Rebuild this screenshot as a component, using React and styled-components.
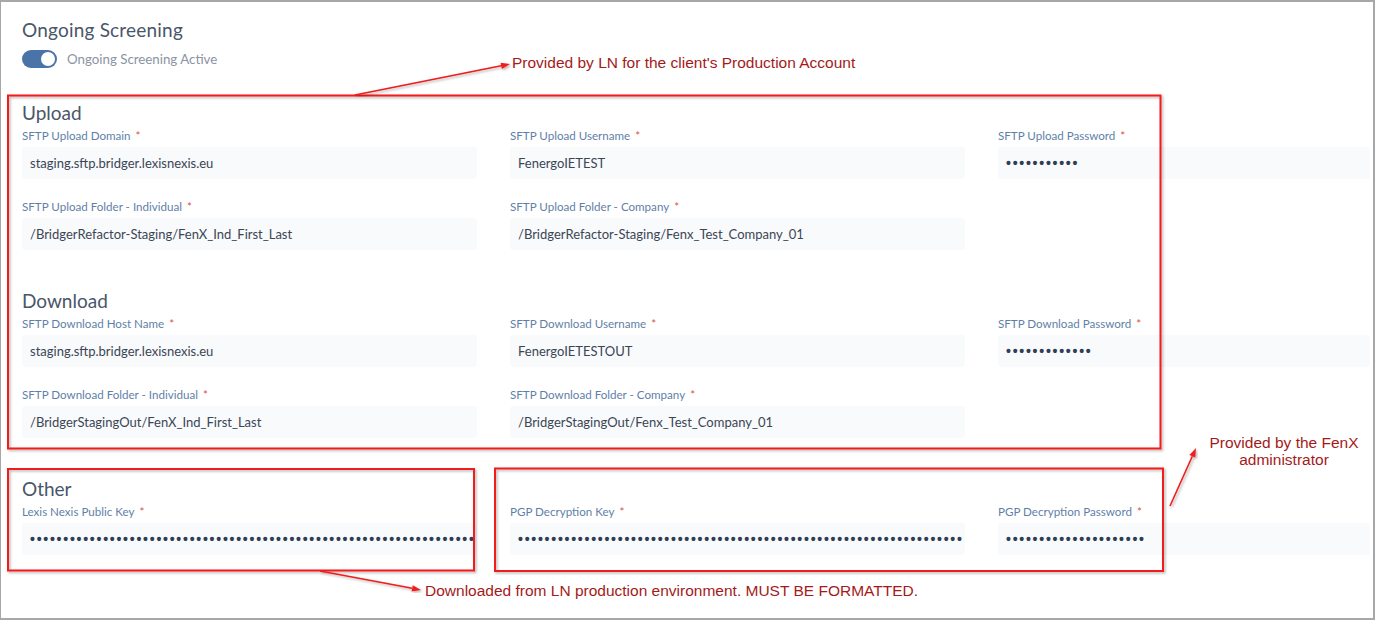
import React from "react";
import styled, { createGlobalStyle } from "styled-components";

const GlobalStyle = createGlobalStyle`
  html, body {
    margin: 0;
    padding: 0;
    background: #ffffff;
  }
  body {
    font-family: Lato, "Open Sans", "Liberation Sans", sans-serif;
  }
  * { box-sizing: border-box; }
`;

const Frame = styled.div`
  position: relative;
  width: 1375px;
  height: 620px;
  border: 2px solid #a7a7a7;
  border-left-width: 1px;
  background: #ffffff;
  overflow: hidden;
`;

const Content = styled.div`
  padding: 16px 3px 0 21px;
`;

const Title = styled.h2`
  margin: 0;
  font-size: 19px;
  line-height: 24px;
  font-weight: 400;
  color: #4a5669;
  letter-spacing: 0.2px;
`;

const ToggleRow = styled.div`
  display: flex;
  align-items: center;
  gap: 10px;
  margin-top: 8px;
  height: 18px;
`;

const Track = styled.span`
  position: relative;
  display: inline-block;
  width: 35px;
  height: 18px;
  border-radius: 9px;
  background: ${({ on }) => (on ? "#4a73a8" : "#c3cad4")};
`;

const Knob = styled.span`
  position: absolute;
  top: 2px;
  left: ${({ on }) => (on ? "19px" : "2px")};
  width: 14px;
  height: 14px;
  border-radius: 50%;
  background: #ffffff;
`;

const ToggleLabel = styled.span`
  font-size: 13.3px;
  color: #8a94a3;
`;

const Section = styled.section`
  margin-top: ${({ first }) => (first ? "33px" : "39px")};
`;

const SectionTitle = styled.h3`
  margin: 0 0 4px 0;
  font-size: 19px;
  line-height: 24px;
  font-weight: 400;
  color: #4a5669;
`;

const Grid = styled.div`
  display: grid;
  grid-template-columns: 455px 455px 1fr;
  column-gap: 33px;
  row-gap: 21px;
`;

const Field = styled.div`
  display: flex;
  flex-direction: column;
  min-width: 0;
`;

const Label = styled.label`
  font-size: 11.6px;
  line-height: 14px;
  margin-bottom: 4px;
  color: #5f7fa8;
  white-space: nowrap;
`;

const Star = styled.span`
  color: #e0504f;
  margin-left: 5px;
`;

const Input = styled.div`
  height: 32px;
  display: flex;
  align-items: center;
  padding: 0 8px;
  border-radius: 3px;
  background: #f8fafc;
  color: #3b4654;
  font-size: 13px;
  white-space: nowrap;
  overflow: hidden;
`;

const Dots = styled.span`
  font-family: "Liberation Sans", Arial, sans-serif;
  font-size: 14px;
  font-weight: 700;
  letter-spacing: 1.75px;
  color: #2f3d55;
`;

const Overlay = styled.svg`
  position: absolute;
  top: -2px;
  left: -1px;
  pointer-events: none;
`;

const Note = styled.div`
  position: absolute;
  top: ${({ top }) => top}px;
  left: ${({ left }) => left}px;
  width: ${({ w }) => (w ? `${w}px` : "auto")};
  font-family: "Liberation Sans", Arial, sans-serif;
  font-size: 15.5px;
  line-height: 17px;
  color: #a41a1a;
  text-align: ${({ center }) => (center ? "center" : "left")};
  white-space: nowrap;
`;

const dots = (n) => "•".repeat(n);

const sections = [
  {
    title: "Upload",
    fields: [
      { label: "SFTP Upload Domain", value: "staging.sftp.bridger.lexisnexis.eu" },
      { label: "SFTP Upload Username", value: "FenergoIETEST" },
      { label: "SFTP Upload Password", secret: 11 },
      { label: "SFTP Upload Folder - Individual", value: "/BridgerRefactor-Staging/FenX_Ind_First_Last" },
      { label: "SFTP Upload Folder - Company", value: "/BridgerRefactor-Staging/Fenx_Test_Company_01" },
    ],
  },
  {
    title: "Download",
    fields: [
      { label: "SFTP Download Host Name", value: "staging.sftp.bridger.lexisnexis.eu" },
      { label: "SFTP Download Username", value: "FenergoIETESTOUT" },
      { label: "SFTP Download Password", secret: 13 },
      { label: "SFTP Download Folder - Individual", value: "/BridgerStagingOut/FenX_Ind_First_Last" },
      { label: "SFTP Download Folder - Company", value: "/BridgerStagingOut/Fenx_Test_Company_01" },
    ],
  },
  {
    title: "Other",
    fields: [
      { label: "Lexis Nexis Public Key", secret: 67 },
      { label: "PGP Decryption Key", secret: 67 },
      { label: "PGP Decryption Password", secret: 21 },
    ],
  },
];

const Arrow = ({ x1, y1, x2, y2 }) => {
  const a = Math.atan2(y2 - y1, x2 - x1);
  const len = 9;
  const w = 3.2;
  const bx = x2 - len * Math.cos(a);
  const by = y2 - len * Math.sin(a);
  const px = -Math.sin(a) * w;
  const py = Math.cos(a) * w;
  return (
    <g filter="url(#shadow)">
      <line x1={x1} y1={y1} x2={bx} y2={by} stroke="#f21b1b" strokeWidth="1.6" />
      <polygon
        points={`${x2},${y2} ${bx + px},${by + py} ${bx - px},${by - py}`}
        fill="#f21b1b"
      />
    </g>
  );
};

const Annotations = () => (
  <Overlay width="1375" height="620" viewBox="0 0 1375 620">
    <defs>
      <filter id="shadow" x="-5%" y="-5%" width="110%" height="110%">
        <feDropShadow dx="1.5" dy="1.5" stdDeviation="0.8" floodColor="#000" floodOpacity="0.3" />
      </filter>
    </defs>
    <g fill="none" stroke="#f31c1c" strokeWidth="2" filter="url(#shadow)">
      <rect x="8" y="95.5" width="1152.5" height="353" />
      <rect x="8" y="469" width="466" height="101.5" />
      <rect x="495" y="468.5" width="668" height="102.5" />
    </g>
    <Arrow x1={355} y1={95} x2={510} y2={64} />
    <Arrow x1={320} y1={571} x2={421} y2={590} />
    <Arrow x1={1170} y1={506} x2={1196} y2={448} />
  </Overlay>
);

export default function App() {
  return (
    <>
      <GlobalStyle />
      <Frame>
        <Content>
          <Title>Ongoing Screening</Title>
          <ToggleRow>
            <Track on={1}>
              <Knob on={1} />
            </Track>
            <ToggleLabel>Ongoing Screening Active</ToggleLabel>
          </ToggleRow>
          {sections.map((s, i) => (
            <Section key={s.title} first={i === 0 ? 1 : 0}>
              <SectionTitle>{s.title}</SectionTitle>
              <Grid>
                {s.fields.map((f) => (
                  <Field key={f.label}>
                    <Label>
                      {f.label}
                      <Star>*</Star>
                    </Label>
                    <Input>{f.secret ? <Dots>{dots(f.secret)}</Dots> : f.value}</Input>
                  </Field>
                ))}
              </Grid>
            </Section>
          ))}
        </Content>
        <Annotations />
        <Note top={52} left={511}>Provided by LN for the client's Production Account</Note>
        <Note top={580} left={424}>Downloaded from LN production environment. MUST BE FORMATTED.</Note>
        <Note top={432} left={1193} w={180} center={1}>
          Provided by the FenX
          <br />
          administrator
        </Note>
      </Frame>
    </>
  );
}
